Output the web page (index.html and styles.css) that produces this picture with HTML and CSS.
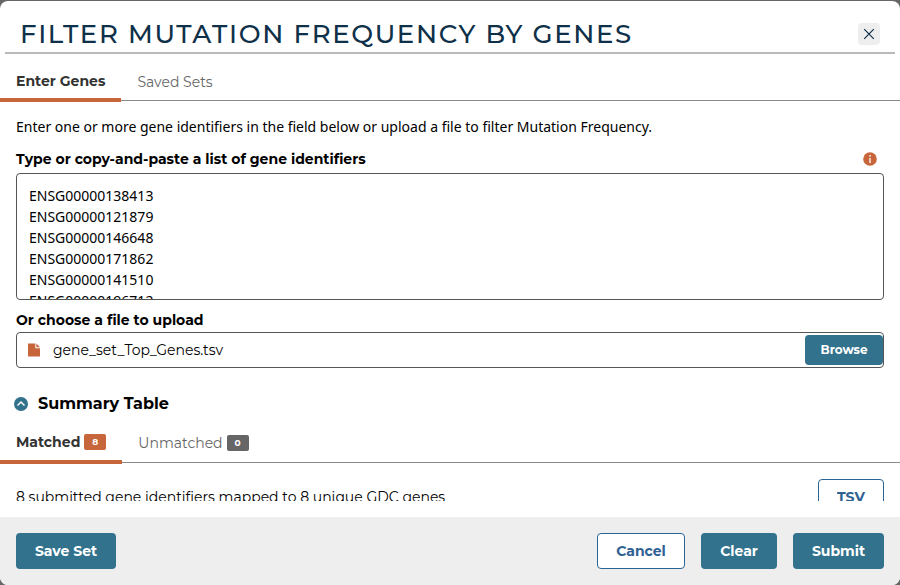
FILE: index.html
```
<!DOCTYPE html>
<html lang="en">
<head>
<meta charset="utf-8">
<title>Filter Mutation Frequency by Genes</title>
<link rel="stylesheet" href="styles.css">
</head>
<body>
<div class="modal">
  <header class="header">
    <h1 class="title">FILTER MUTATION FREQUENCY BY GENES</h1>
    <button class="close" aria-label="Close"><svg width="12" height="12" viewBox="0 0 12 12"><path d="M1.200 1.200l9.600 9.600M10.800 1.200l-9.600 9.600" stroke="#13304a" stroke-width="1.200" fill="none"/></svg></button>
  </header>
  <main class="body">
    <nav class="tabs">
      <button class="tab active">Enter Genes</button>
      <button class="tab">Saved Sets</button>
    </nav>
    <section class="form">
      <p class="intro">Enter one or more gene identifiers in the field below or upload a file to filter Mutation Frequency.</p>
      <div class="label-row">
        <span class="label">Type or copy-and-paste a list of gene identifiers</span>
        <svg class="info" width="14" height="14" viewBox="0 0 14 14"><circle cx="7" cy="7" r="6.800" fill="#c7663a"/><path d="M7 3v1.800M7 6v5" stroke="#f3ddd3" stroke-width="1.700"/></svg>
      </div>
      <div class="genes">ENSG00000138413<br>ENSG00000121879<br>ENSG00000146648<br>ENSG00000171862<br>ENSG00000141510<br>ENSG00000196712</div>
      <div class="label upload-label">Or choose a file to upload</div>
      <div class="file">
        <svg class="file-icon" width="12" height="14" viewBox="0 0 12 14"><path d="M0 .5h7.300v4.700H12v8.300H0z" fill="#c7663a"/><path d="M8.300.5v3.700H12z" fill="#c7663a"/></svg>
        <span class="file-name">gene_set_Top_Genes.tsv</span>
        <button class="browse">Browse</button>
      </div>
    </section>
    <div class="summary">
      <svg width="14" height="14" viewBox="0 0 14 14"><circle cx="7" cy="7" r="7" fill="#32728c"/><path d="M3.500 8.500L7 5l3.500 3.500" stroke="#fff" stroke-width="1.500" fill="none"/></svg>
      <h2 class="summary-title">Summary Table</h2>
    </div>
    <nav class="tabs match-tabs">
      <button class="tab active">Matched<span class="count">8</span></button>
      <button class="tab">Unmatched<span class="count">0</span></button>
    </nav>
    <div class="results">
      <p class="mapped">8 submitted gene identifiers mapped to 8 unique GDC genes</p>
      <button class="btn outline tsv">TSV</button>
    </div>
  </main>
  <footer class="footer">
    <button class="btn save">Save Set</button>
    <button class="btn outline cancel">Cancel</button>
    <button class="btn clear">Clear</button>
    <button class="btn submit">Submit</button>
  </footer>
</div>
</body>
</html>
```
FILE: styles.css
```
* { box-sizing: border-box; }
body {
  margin: 0;
  padding-top: 1px;
  height: 585px;
  overflow: hidden;
  background: #666;
  font-family: Montserrat, sans-serif;
  color: #000;
}
h1, h2, p { margin: 0; }
button { font-family: inherit; border: 0; padding: 0; margin: 0; }
svg { display: block; flex: none; }
.modal {
  height: 584px;
  background: #fff;
  border-radius: 8px;
  overflow: hidden;
  display: flex;
  flex-direction: column;
}
.header {
  flex: none;
  height: 53px;
  margin: 0 5px;
  padding: 15px 15px 0;
  border-bottom: 2px solid #bababa;
  display: flex;
  justify-content: space-between;
  align-items: center;
}
.title {
  font-size: 26px;
  line-height: 36px;
  font-weight: 500;
  letter-spacing: 1.63px;
  color: #0f3049;
  white-space: nowrap;
}
.close {
  width: 22px;
  height: 22px;
  border-radius: 4px;
  background: #eee;
  display: flex;
  align-items: center;
  justify-content: center;
}
.body { flex: none; height: 447px; overflow: hidden; }
.tabs {
  height: 47px;
  border-bottom: 1px solid #8a8a8a;
  display: flex;
}
.tab {
  height: 47px;
  padding: 9px 16px 0;
  background: none;
  font-size: 14px;
  color: #666;
  display: flex;
  align-items: center;
}
.tab.active {
  height: 48px;
  padding-top: 10px;
  border-bottom: 4px solid #c7663a;
  font-weight: 700;
  color: #333;
}
.match-tabs .tab { padding-top: 7px; }
.match-tabs .tab.active { padding-top: 8px; }
.form { padding: 16px 16px 0; }
.intro { font: 14px/20px "Noto Sans", sans-serif; }
.label { font-size: 14px; line-height: 20px; font-weight: 700; }
.label-row {
  margin-top: 12px;
  padding-right: 7px;
  display: flex;
  justify-content: space-between;
  align-items: center;
}
.genes {
  height: 127px;
  margin-top: 4px;
  padding: 11px 12px;
  border: 1px solid #555;
  border-radius: 4px;
  overflow: hidden;
  font: 14px/21px "Noto Sans", sans-serif;
}
.upload-label { margin-top: 10px; }
.file {
  height: 36px;
  margin-top: 2px;
  padding-left: 11px;
  border: 1px solid #555;
  border-radius: 4px;
  display: flex;
  align-items: center;
}
.file-name { margin: 0 0 1px 13px; font-size: 14px; line-height: 20px; }
.browse {
  width: 78px;
  height: 30px;
  margin-left: auto;
  padding-bottom: 1px;
  border-radius: 4px;
  background: #32728c;
  color: #fff;
  font-size: 12px;
  font-weight: 700;
}
.summary {
  height: 24px;
  margin: 24px 0 0 14px;
  display: flex;
  align-items: center;
  gap: 10px;
}
.summary-title { font-size: 16px; line-height: 24px; font-weight: 700; }
.count {
  width: 22px;
  height: 16px;
  margin-left: 4px;
  border-radius: 2px;
  background: #666;
  color: #fff;
  font-size: 9px;
  line-height: 16px;
  font-weight: 700;
  text-align: center;
}
.active .count { background: #c7663a; }
.results {
  padding: 16px 16px 0;
  display: flex;
  justify-content: space-between;
  align-items: center;
}
.mapped { font-size: 14px; line-height: 20px; }
.btn {
  height: 36px;
  border-radius: 4px;
  background: #32728c;
  color: #fff;
  font-size: 14px;
  font-weight: 700;
}
.outline { background: #fff; border: 1px solid #2a6496; color: #2f6193; }
.tsv { width: 66px; }
.footer {
  height: 68px;
  margin-top: auto;
  padding: 0 16px;
  background: #eee;
  display: flex;
  align-items: center;
  gap: 16px;
}
.save { width: 100px; margin-right: auto; }
.cancel { width: 88px; }
.clear { width: 76px; }
.submit { width: 91px; }
```
